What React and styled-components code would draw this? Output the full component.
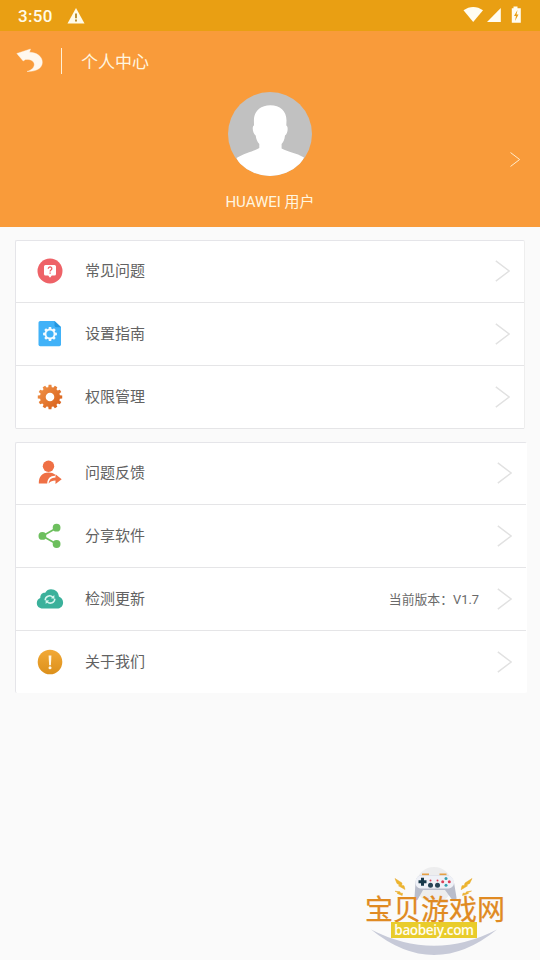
import React from 'react';
import styled, { createGlobalStyle } from 'styled-components';

const GlobalStyle = createGlobalStyle`
    * {
        box-sizing: border-box;
    }
    body {
        margin: 0;
        background: #fafafa;
        font-family: Roboto, "Noto Sans CJK SC", sans-serif;
    }
    svg {
        display: block;
    }
`;

const Screen = styled.div`
    position: relative;
    width: 540px;
    height: 960px;
    overflow: hidden;
    background: #fafafa;
`;

// Status bar
const StatusBar = styled.div`
    display: flex;
    align-items: center;
    height: 31px;
    padding: 0 18px;
    background: #e99f13;
    color: #fffbe8;
`;

const Time = styled.span`
    margin-right: 14px;
    padding-top: 1px;
    font-size: 17px;
    font-weight: 500;
    letter-spacing: 0.35px;
`;

const StatusIcons = styled.div`
    margin-left: auto;
`;

// Profile header
const Header = styled.header`
    height: 196px;
    background: #f99b3a;
    color: #fff6e0;
`;

const TitleBar = styled.div`
    display: flex;
    align-items: center;
    height: 61px;
    padding-left: 16px;
`;

const Divider = styled.div`
    width: 1px;
    height: 26px;
    margin: 0 19px 2px 17px;
    background: #fff0d5;
`;

const Title = styled.h1`
    margin: 0;
    font-size: 17px;
    font-weight: 400;
    line-height: 24px;
`;

const Profile = styled.div`
    display: grid;
    grid-template-columns: 1fr 84px 1fr;
    align-items: center;
`;

const Avatar = styled.div`
    grid-column: 2;
    width: 84px;
    height: 84px;
    overflow: hidden;
    border-radius: 50%;
    background: #c1c1c1;
`;

const ProfileArrow = styled.div`
    justify-self: end;
    margin-top: 51px;
    margin-right: 20px;
`;

const UserName = styled.div`
    margin-top: 15px;
    font-size: 15px;
    line-height: 22px;
    text-align: center;
`;

// Menu cards
const Menus = styled.main`
    display: flex;
    flex-direction: column;
    gap: 13px;
    padding: 13px 0 0 15px;
`;

const Card = styled.section`
    width: ${props => props.$wide ? 512 : 510}px;
    border: 1px solid #e5e5e9;
    border-right-color: ${props => props.$wide ? '#fff' : '#eeeeee'};
    border-bottom: 0;
    border-radius: 2px;
    background: #fff;
`;

const Row = styled.div`
    display: flex;
    align-items: center;
    height: 63px;
    padding: 0 14px 0 19px;
    border-bottom: 1px solid #e5e5e7;

    &:first-child {
        height: 62px;
        padding-bottom: 1px;
    }
    &:last-child {
        height: ${props => props.$open ? 62 : 63}px;
        border-bottom-width: ${props => props.$open ? 0 : 1}px;
    }
`;

const Label = styled.span`
    margin: 0 auto 1px 20px;
    color: #626262;
    font-size: 15px;
    line-height: 22px;
`;

const Version = styled.span`
    margin: 2px 18px 0 0;
    color: #6a6a6a;
    font-size: 12.85px;
    line-height: 18px;
`;

// Site mark in the bottom corner
const Mark = styled.div`
    position: absolute;
    left: 360px;
    top: 864px;
    width: 150px;
    height: 96px;
    text-align: center;
`;

const MarkArt = styled.svg`
    position: absolute;
    left: 0;
    top: 0;
`;

const MarkName = styled.div`
    position: relative;
    padding: 30px 0 0 5px;
    color: #e08a22;
    font-family: "Noto Sans CJK SC", sans-serif;
    font-size: 28px;
    font-weight: 400;
    line-height: 28px;
    text-align: left;
    white-space: nowrap;
    -webkit-text-stroke: 0.25px #e08a22;
`;

const MarkSite = styled.div`
    position: relative;
    width: 86px;
    height: 16px;
    margin-left: 31px;
    background: #e9cc2b;
    color: #fffdf0;
    font-family: "Open Sans", sans-serif;
    font-size: 13.6px;
    font-weight: 600;
    line-height: 15px;
    letter-spacing: -0.4px;
`;

const BackIcon = () => (
    <svg width="28" height="30" viewBox="0 0 28 30">
        <path d="M.8 6.500 14.500 2l-1 3.300c7 0 12.800 4 12.800 10 0 5.700-5.500 9.300-15.300 9.200 5-1.500 7.500-4.500 7.300-7.300-.3-3.200-3.600-5.200-8.800-4.700L7.200 14z" fill="#fff8ee" stroke="#fff8ee" strokeOpacity="0.4" />
    </svg>
);

const Arrow = ({ size = 22, color = '#e1e1e1' }) => (
    <svg width={size * 0.68} height={size} viewBox="0 0 15 22">
        <path d="M.8.800 14.200 11 .8 21.200" fill="none" stroke={color} strokeWidth="1.400" />
    </svg>
);

const Person = () => (
    <svg width="84" height="84" viewBox="0 0 84 84">
        <path d="M42.300 13.300c9.700 0 16.200 5.700 16.200 15.200l-.2 5c2.200.7 1.700 8.500-1.300 10-.5 4.500-1.700 6.500-3.400 8.500v4.500c5 3 15 4.500 22.400 9L68 84H16L8.500 66c7.500-5 18-7 22.800-10v-4c-2.200-2.500-3-4.500-3.600-8.500-3-1.500-4-9.300-1.700-10l-.1-5c0-9.500 6.700-15.200 16.400-15.200z" fill="#fff" />
    </svg>
);

const gearPath = (count, outer, inner) => {
    const points = [];
    for (let i = 0; i < count; i++) {
        [[-0.34, inner], [-0.22, outer], [0.22, outer], [0.34, inner]].forEach(([shift, radius]) => {
            const angle = ((i + shift) / count) * Math.PI * 2 - Math.PI / 2;
            points.push(`${14 + radius * Math.cos(angle)} ${14 + radius * Math.sin(angle)}`);
        });
    }
    return `M${points.join('L')}Z`;
};

const icons = {
    question: (
        <>
            <circle cx="14" cy="14" r="12.500" fill="#ee6267" />
            <path d="M9.500 8h9q1.500 0 1.500 1.500v7.500q0 1.500-1.500 1.500h-2.700L14 20.800l-1.800-2.300H9.500Q8 18.500 8 17V9.500Q8 8 9.500 8z" fill="#fff" />
            <path d="M12.300 11.700c0-2.400 3.700-2.200 3.500 0 0 1.400-1.700 1.300-1.700 2.700M14.100 15.400v1.300" fill="none" stroke="#ee6267" strokeWidth="1.300" />
        </>
    ),
    guide: (
        <>
            <path d="M4.200 1h14.300L25 7v17.500q0 1.700-1.700 1.700H4.200q-1.700 0-1.700-1.700V2.700Q2.500 1 4.200 1z" fill="#41b2f8" />
            <path d="M18.500 1 25 7.200h-4.800q-1.700 0-1.700-1.700z" fill="#2496df" />
            <path d={gearPath(8, 7, 5.4)} fill="#f4fbff" />
            <circle cx="14" cy="14" r="3.600" fill="#41b2f8" />
        </>
    ),
    gear: (
        <>
            <defs>
                <linearGradient id="gear" x1="0" y1="0" x2="1" y2="1">
                    <stop offset="0" stopColor="#f2964b" />
                    <stop offset="1" stopColor="#d65c17" />
                </linearGradient>
            </defs>
            <path d={gearPath(12, 12.3, 10)} fill="url(#gear)" />
            <circle cx="14" cy="14" r="4.300" fill="#fff" />
        </>
    ),
    feedback: (
        <>
            <circle cx="12.500" cy="7.200" r="5.700" fill="#ef7045" />
            <path d="M2.800 24.500c0-7 3.200-11 9.700-11 3 0 5 .7 6.500 2v1.200c-5 0-7.500 3-7.800 7.800z" fill="#ef7045" />
            <path d="M12.700 24.500c.4-4 2.600-5.800 6.800-6v-3.200l6.200 4.900-6.200 4.900v-3.600c-3 0-5 .8-6.800 3z" fill="#ef7045" />
        </>
    ),
    share: (
        <g fill="#6dbf5e">
            <path d="M20.500 6 6.500 14l14 8" fill="none" stroke="#6dbf5e" strokeWidth="1.700" />
            <circle cx="20.600" cy="5.700" r="3.900" />
            <circle cx="6.400" cy="13.900" r="3.900" />
            <circle cx="20.600" cy="22" r="3.900" />
        </g>
    ),
    update: (
        <>
            <path d="M7 23.500C2.800 23.500.8 21 .8 18c0-2.600 1.500-4.400 3.500-5C4 9.500 6.500 7.200 9.200 7.700 10.500 5.200 12.500 4.200 15 4.200c4.400 0 7.600 3 7.900 7.200 2.400.8 4.200 3.200 4.200 6 0 3.600-2.500 6.100-6.100 6.100z" fill="#3bb19b" />
            <path d="M9.200 15.200c0-3.700 4.600-6 7.700-3M18.800 13.700c0 3.700-4.600 6-7.700 3" fill="none" stroke="#d8f6ef" strokeWidth="1.500" />
            <path d="m18.300 10 .1 3.700-3.500-.4zM9.700 18.900l-.1-3.700 3.500.4z" fill="#d8f6ef" />
        </>
    ),
    about: (
        <>
            <defs>
                <linearGradient id="about" x1="0" y1="0" x2="0" y2="1">
                    <stop offset="0" stopColor="#f2a936" />
                    <stop offset="1" stopColor="#dc901c" />
                </linearGradient>
            </defs>
            <circle cx="14" cy="14" r="12.300" fill="url(#about)" />
            <path d="M12.600 7.500h2.800l-.5 9.700h-1.800z" fill="#fff8e7" />
            <circle cx="14" cy="19.800" r="1.500" fill="#fff8e7" />
        </>
    ),
};

const MenuRow = ({ icon, label, version, open }) => (
    <Row $open={open}>
        <svg width="30" height="28" viewBox="-1 0 30 28">{icons[icon]}</svg>
        <Label>{label}</Label>
        {version && <Version>{version}</Version>}
        <Arrow />
    </Row>
);

const SiteMark = () => (
    <Mark>
        <MarkArt width="150" height="96" viewBox="0 0 150 96">
            <circle cx="74" cy="21" r="18" fill="#ededee" />
            <path d="M11 65.500Q74 116.500 137 65.500Q74 98 11 65.500z" fill="#c7cad8" />
            <path d="M62 10.500h7M79.500 10.500h7" stroke="#e6a044" strokeWidth="2" />
            <path d="M61 11.500h26c4 0 6 3 7 7l2.500 15c.5 4-2.500 5-4.500 2L85 26H63l-5 9c-1.500 2.500-4 1.500-3.500-1.500l1-15c.5-4 2-7 5.500-7z" fill="#b9bdcb" />
            <path d="M61 11.500h26c4 0 7 3 7 7 0 4-3 6-7 6H62c-4 0-6.500-2-6.500-6 0-4 2-7 5.500-7z" fill="#eff1f7" />
            <path d="M62.500 13.800v8M58.500 17.800h8" stroke="#18394a" strokeWidth="3" />
            <circle cx="70.500" cy="21.300" r="2.500" fill="#284456" />
            <circle cx="77.500" cy="21.300" r="2.500" fill="#284456" />
            <circle cx="70.500" cy="16.500" r="1" fill="#dc4057" />
            <circle cx="77.500" cy="16.500" r="1" fill="#dc4057" />
            <circle cx="86" cy="14.500" r="1.500" fill="#36a0b0" />
            <circle cx="82.700" cy="17.800" r="1.500" fill="#dc4057" />
            <circle cx="89.300" cy="17.800" r="1.500" fill="#dc4057" />
            <circle cx="86" cy="21.200" r="1.500" fill="#36a0b0" />
            <path d="m35 14.500 7 4.500-.3 2.500 2.300.2 1 3.800-6.500-3.700 1.200-.9-2.700-1.400zM35 27.200l5 .6.500 1.500 2-.1-.3 2.300-5-2.100 1-.6zM112 14.500l-7 4.500-.7 2.500-2.300.2-.9 4 6.500-3.900-1.200-.9 3.200-1.400zM111.500 27l-5 .8-1 1.500-2.500-.1-.5 2.300 6-2.100-1-.6z" fill="#edb52c" stroke="#e7a92c" strokeWidth="0.500" />
        </MarkArt>
        <MarkName>宝贝游戏网</MarkName>
        <MarkSite>baobeiy.com</MarkSite>
    </Mark>
);

export default function App() {
    return (
        <Screen>
            <GlobalStyle />
            <StatusBar>
                <Time>3:50</Time>
                <svg width="18" height="16" viewBox="0 0 18 16">
                    <path d="M9 0 17.500 15.500H.5z" fill="#fffbe8" />
                    <path d="M9 5.500v4.800M9 11.500v2" stroke="#b58823" strokeWidth="1.800" />
                </svg>
                <StatusIcons>
                    <svg width="60" height="22" viewBox="0 0 60 22">
                        <path d="M1.500 5.300c6-4.500 13.500-4.500 19.500 0L11.200 17z" fill="#fffdf2" />
                        <path d="M38.800 3v14H25z" fill="#fffdf2" />
                        <path d="M51.500 1.500h4v1.700h3.300v14.500h-9V3.200h1.700z" fill="#fffdf2" />
                        <path d="m55.500 5-3.500 6h2l-1 5 3.500-6.500h-2z" fill="#e99f13" />
                    </svg>
                </StatusIcons>
            </StatusBar>
            <Header>
                <TitleBar>
                    <BackIcon />
                    <Divider />
                    <Title>个人中心</Title>
                </TitleBar>
                <Profile>
                    <Avatar><Person /></Avatar>
                    <ProfileArrow><Arrow size={15} color="#fff0d5" /></ProfileArrow>
                </Profile>
                <UserName>HUAWEI 用户</UserName>
            </Header>
            <Menus>
                <Card>
                    <MenuRow icon="question" label="常见问题" />
                    <MenuRow icon="guide" label="设置指南" />
                    <MenuRow icon="gear" label="权限管理" />
                </Card>
                <Card $wide>
                    <MenuRow icon="feedback" label="问题反馈" />
                    <MenuRow icon="share" label="分享软件" />
                    <MenuRow icon="update" label="检测更新" version="当前版本：V1.7" />
                    <MenuRow icon="about" label="关于我们" open />
                </Card>
            </Menus>
            <SiteMark />
        </Screen>
    );
}
